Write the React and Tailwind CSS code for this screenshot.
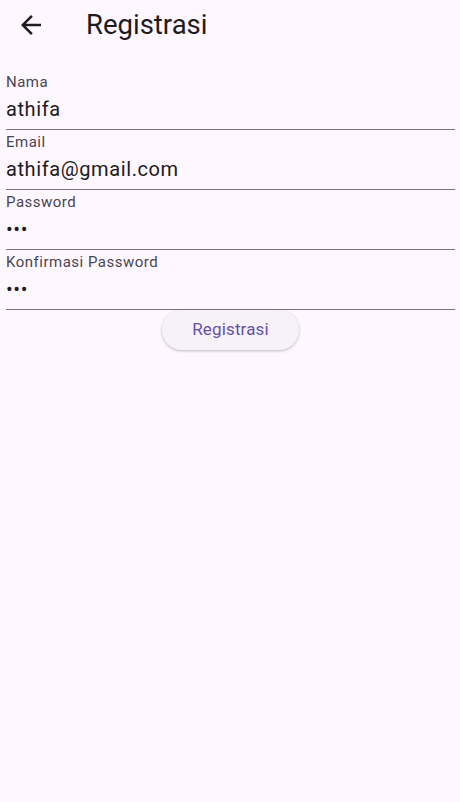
const fields = [
  { label: 'Nama', value: 'athifa' },
  { label: 'Email', value: 'athifa@gmail.com' },
  { label: 'Password', value: '•••' },
  { label: 'Konfirmasi Password', value: '•••' },
]

function Field({ label, value }) {
  return (
    <div className="h-[60px] pt-[2px] border-b border-[#79747e]">
      <div className="h-[20px] text-[15px] leading-[20px] tracking-[0.5px] text-[#49454f]">{label}</div>
      <div className="mt-[5px] h-[24px] text-[20px] leading-[24px] tracking-[0.6px] text-[#1d1b20]">{value}</div>
    </div>
  )
}

export default function App() {
  return (
    <div className="min-h-[802px] w-[460px] bg-[#fef7ff]" style={{ fontFamily: 'Roboto, "Noto Sans", sans-serif' }}>
      <div className="h-[50px] flex items-center">
        <button className="w-[62px] h-[50px] flex items-center justify-center text-[#1d1b20]">
          <svg width="30" height="30" viewBox="0 0 24 24" fill="currentColor">
            <path d="M20 11H7.83l5.59-5.59L12 4l-8 8 8 8 1.41-1.41L7.83 13H20v-2z" />
          </svg>
        </button>
        <h1 className="ml-[24px] text-[27.5px] leading-[32px] text-[#1d1b20]">Registrasi</h1>
      </div>
      <div className="pt-[20px] pl-[6px] pr-[5px] flex flex-col">
        {fields.map((f) => (
          <Field key={f.label} label={f.label} value={f.value} />
        ))}
        <div className="flex justify-center">
          <button className="h-[40px] px-[30px] rounded-full bg-[#f7f2fa] text-[17px] tracking-[0.15px] text-[#6750a4] shadow-[0_1px_3px_rgba(0,0,0,0.25)]">
            Registrasi
          </button>
        </div>
      </div>
    </div>
  )
}
